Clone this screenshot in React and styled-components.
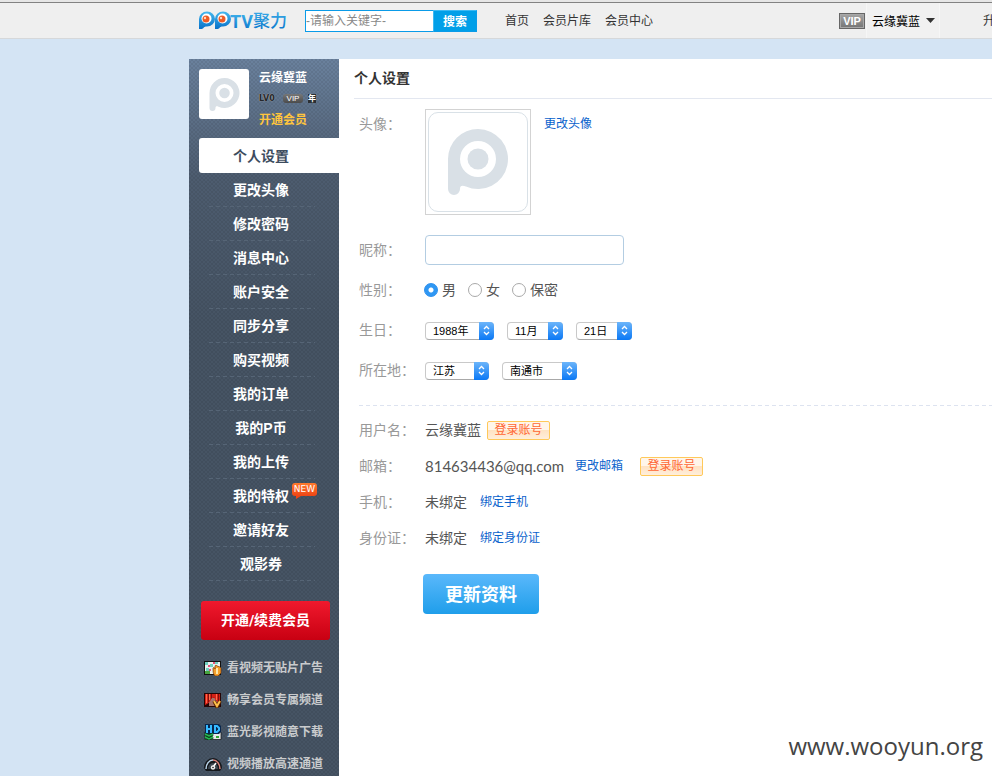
import React from "react";
import styled, { createGlobalStyle } from "styled-components";

const GlobalStyle = createGlobalStyle`
  *, *::before, *::after { box-sizing: border-box; }
  html { height: 100%; overflow: hidden; }
  body {
    margin: 0;
    height: 100%;
    background: #d4e4f4;
    color: #333;
    font: 14px/20px "Liberation Sans", "Noto Sans CJK SC", sans-serif;
  }
  #root { min-height: 100%; display: flex; flex-direction: column; }
  ul { margin: 0; padding: 0; list-style: none; }
  a { color: inherit; text-decoration: none; }
  button, input, select { font-family: inherit; margin: 0; }
  svg { display: block; flex: none; }
`;

const Page = styled.div`
  flex: 1;
  display: flex;
  flex-direction: column;
  overflow: hidden;
`;

/* ---------- top bar ---------- */
const TopBar = styled.header`
  display: flex;
  align-items: center;
  flex: none;
  height: 39px;
  padding: 3px 0 0 198px;
  background: linear-gradient(#e6e6e6 2px, #828282 2px, #828282 3px, #efefef 3px);
  border-bottom: 1px solid #d6d8da;
  font-size: 12px;
  white-space: nowrap;
`;

const SearchForm = styled.form`
  display: flex;
  flex: none;
  height: 22px;
  margin: 0 28px 0 16px;
`;

const SearchInput = styled.input`
  width: 128px;
  padding: 0;
  border: 1px solid #0a9be8;
  border-right: 0;
  border-radius: 0;
  background: #fff;
  font-size: 12px;
  outline: 0;
  &::placeholder { color: #888; opacity: 1; }
`;

const SearchButton = styled.button`
  width: 44px;
  padding: 0;
  border: 1px solid #0a9be8;
  border-top-color: #3cb9f2;
  border-left-color: #3cb9f2;
  background: #009fe8;
  color: #fff;
  font-size: 12px;
  font-weight: bold;
`;

const TopNav = styled.nav`
  display: flex;
  gap: 14px;
`;

const UserArea = styled.div`
  display: flex;
  align-items: center;
  flex: none;
  width: 153px;
  height: 100%;
  margin-left: auto;
  overflow: hidden;
`;

const VipBadge = styled.span`
  width: 26px;
  flex: none;
  height: 16px;
  border: 1px solid #666;
  box-shadow: inset 0 0 0 1px #a8a8a8;
  background: linear-gradient(#a5a5a5, #747474);
  color: #fff;
  font-size: 11px;
  line-height: 14px;
  text-align: center;
  font-weight: bold;
`;

const UserMenu = styled.button`
  display: flex;
  align-items: center;
  flex: none;
  gap: 6px;
  height: 100%;
  width: 74px;
  margin: 0 43px 0 1px;
  padding: 0 0 0 5px;
  border: 0;
  border-left: 1px solid #f6f6f6;
  border-right: 1px solid #f6f6f6;
  background: #f1f1f1;
  color: #000;
  font-size: 12px;
`;

/* ---------- columns ---------- */
const Columns = styled.div`
  flex: 1;
  display: flex;
  align-items: stretch;
  padding: 20px 0 0 189px;
`;

const Sidebar = styled.aside`
  flex: none;
  width: 150px;
  background:
    conic-gradient(rgba(0, 0, 0, 0.07) 25%, transparent 0 50%, rgba(0, 0, 0, 0.07) 0 75%, transparent 0) 0 0 / 4px 4px,
    linear-gradient(#6a819d, #4d5c6f 120px, #465464 260px);
`;

const Profile = styled.div`
  display: flex;
  gap: 10px;
  height: 79px;
  padding: 10px 0 0 10px;
`;

const SmallAvatar = styled.div`
  display: grid;
  place-items: center;
  width: 50px;
  height: 50px;
  border-radius: 3px;
  background: #fff;
`;

const ProfileInfo = styled.div`
  font-size: 12px;
  line-height: 18px;
  font-weight: bold;
  color: #fff;
`;

const BadgeRow = styled.div`
  display: flex;
  align-items: center;
  gap: 5px;
  height: 22px;
  font-size: 8px;
  line-height: 9px;
`;

const Level = styled.span`
  width: 19px;
  color: #25282c;
  font: bold 8px/9px "DejaVu Sans", sans-serif;
  text-shadow: 0 0 1px #aaa, 0 0 1px #999;
`;

const MiniVip = styled.span`
  width: 20px;
  border-radius: 3px;
  background: linear-gradient(#777, #4b4b4b);
  text-align: center;
  font-weight: normal;
`;

const YearMark = styled.span`
  background: #2b2f33;
`;

const OpenLink = styled.a`
  display: block;
  line-height: 22px;
  color: #ffc53d;
`;

const MenuLink = styled.a`
  display: flex;
  justify-content: center;
  align-items: center;
  height: ${(p) => (p.$active ? 35 : 34)}px;
  margin-left: 10px;
  padding-right: 16px;
  border-radius: 3px 0 0 3px;
  color: ${(p) => (p.$active ? "#3d4c5e" : "#fff")};
  background: ${(p) => (p.$active ? "#fff" : "transparent")};
  font-weight: bold;
`;

const MenuItem = styled.li`
  position: relative;
  &:not(:first-child)::after {
    content: "";
    position: absolute;
    left: 20px;
    right: 24px;
    bottom: 0;
    height: 1px;
    background: repeating-linear-gradient(90deg, #566576 0 4px, transparent 4px 7px);
  }
`;

const NewBadge = styled.span`
  position: absolute;
  left: 103px;
  top: 4px;
  width: 25px;
  height: 13px;
  border-radius: 3px;
  background: linear-gradient(#ff7a2e, #ee4515);
  color: #fff;
  font: 9px/13px "DejaVu Sans", sans-serif;
  text-align: center;
  &::after {
    content: "";
    position: absolute;
    left: 4px;
    top: 13px;
    border: solid transparent;
    border-width: 0 5px 3px 0;
    border-top: 3px solid #ee4515;
    border-bottom: 0;
  }
`;

const RenewButton = styled.button`
  display: block;
  width: 129px;
  height: 39px;
  margin: 20px 0 12px 12px;
  padding: 0;
  border: 0;
  border-radius: 3px;
  background: linear-gradient(#f0192d, #c80012);
  color: #fff;
  font: bold 14px/39px "DejaVu Sans", "Noto Sans CJK SC", sans-serif;
`;

const Perk = styled.li`
  display: flex;
  align-items: center;
  gap: 5px;
  height: 32px;
  padding-left: 15px;
  color: #c9cbcd;
  font-size: 12px;
  font-weight: bold;
  white-space: nowrap;
`;

/* ---------- main panel ---------- */
const Main = styled.main`
  flex: 1;
  min-width: 0;
  background: #fff;
`;

const Title = styled.h1`
  height: 40px;
  margin: 0 0 10px 15px;
  border-bottom: 1px solid #e3e7f0;
  color: #333;
  font-size: 14px;
  line-height: 38px;
`;

const Section = styled.div`
  margin-left: 20px;
`;

const Row = styled.div`
  display: grid;
  grid-template-columns: 66px 1fr;
  align-items: ${(p) => (p.$top ? "start" : "center")};
  min-height: ${(p) => p.$height}px;
`;

const Label = styled.label`
  color: #999;
  line-height: 30px;
`;

const Value = styled.div`
  display: flex;
  align-items: ${(p) => (p.$top ? "start" : "center")};
  gap: ${(p) => p.$gap || 13}px;
  color: #555;
`;

const PhotoFrame = styled.div`
  width: 106px;
  height: 106px;
  padding: 2px;
  border: 1px solid #d3d3d3;
`;

const Photo = styled.div`
  display: grid;
  place-items: center;
  height: 100%;
  border: 1px solid #d9e1e7;
  border-radius: 10px;
`;

const TextLink = styled.a`
  color: #0a62cc;
  font-size: 12px;
  line-height: ${(p) => (p.$tall ? 30 : 20)}px;
`;

const TextBox = styled.input`
  width: 199px;
  height: 30px;
  padding: 0 8px;
  border: 1px solid #b3cde2;
  border-radius: 4px;
  font-size: 14px;
`;

const Choices = styled.div`
  display: flex;
  gap: 12px;
  margin-left: -1px;
  color: #555;
`;

const Choice = styled.label`
  display: flex;
  align-items: center;
  gap: 4px;
`;

const Radio = styled.input`
  appearance: none;
  width: 14px;
  height: 14px;
  border: 1px solid #a9a9a9;
  border-radius: 50%;
  background: #fff;
  &:checked {
    border-color: #2b8fee;
    background: radial-gradient(circle, #fff 2px, #2f97f3 3px);
  }
`;

const SelectWrap = styled.span`
  position: relative;
  display: block;
  width: ${(p) => p.$width}px;
  height: 18px;
  margin-top: 1px;
`;

const SelectField = styled.select`
  display: block;
  appearance: none;
  width: 100%;
  height: 100%;
  padding: 0 16px 0 7px;
  border: 1px solid #c9c9c9;
  border-bottom-color: #a8a8a8;
  border-radius: 4px;
  background: #fff;
  color: #000;
  font-size: 11px;
  line-height: 16px;
`;

const Stepper = styled.span`
  position: absolute;
  top: 0;
  right: 0;
  display: grid;
  place-items: center;
  width: 15px;
  height: 18px;
  border-radius: 0 4px 4px 0;
  background: linear-gradient(#6cb5fa, #0a78f5);
  pointer-events: none;
`;

const Divider = styled.div`
  height: 1px;
  margin: 15px 0 6px;
  background: repeating-linear-gradient(90deg, #dde3f0 0 4px, transparent 4px 7px);
`;

const Email = styled.span`
  font-family: Lato, sans-serif;
  font-size: 15px;
`;

const Tag = styled.span`
  width: 63px;
  height: 19px;
  margin-left: ${(p) => (p.$spaced ? 6 : 0)}px;
  border: 1px solid #ffc95a;
  border-radius: 2px;
  background: linear-gradient(#fff6ea 50%, #ffe3c3 50%, #ffeedb);
  color: #ff6633;
  font-size: 12px;
  line-height: 17px;
  text-align: center;
`;

const SaveButton = styled.button`
  display: block;
  width: 116px;
  height: 40px;
  margin: 18px 0 0 64px;
  padding: 0 0 2px;
  border: 0;
  border-radius: 4px;
  background: linear-gradient(#5ab8fb, #1f9eea);
  color: #fff;
  font-size: 18px;
  font-weight: bold;
`;

const Watermark = styled.div`
  position: absolute;
  right: 9px;
  bottom: 12px;
  color: #444;
  font: 24px/36px "Open Sans", sans-serif;
`;

/* ---------- drawings ---------- */
function PMark({ size }) {
  return (
    <svg width={size} height={size} viewBox="0 0 66 66" aria-hidden="true">
      <path
        fill="#d9e0e6"
        fillRule="evenodd"
        d="M33 0a30 30 0 1 1-12 57.500c-4-1.500-6-1-6 2.500a6 6 0 0 1-12 0V30A30 30 0 0 1 33 0zM33 12a18 18 0 1 0 0 36 18 18 0 0 0 0-36z"
      />
      <circle cx="33" cy="30" r="10.500" fill="#d9e0e6" />
    </svg>
  );
}

function Eye({ x }) {
  return (
    <g transform={`translate(${x} 0)`}>
      <path d="M1 20V10a8 7.500 0 1 1 8 7.500c-2 0-3 .5-3.500 1.500S3 20 1 20z" fill="url(#pptvBlue)" />
      <circle cx="8.500" cy="9.500" r="5" fill="#fff" />
      <circle cx="8" cy="10" r="3.500" fill="#ed5b25" />
      <circle cx="7" cy="9" r="1.200" fill="#ffd9bd" />
    </g>
  );
}

function Logo() {
  return (
    <svg width="91" height="24" viewBox="0 0 91 24" role="img" aria-label="PPTV聚力">
      <defs>
        <linearGradient id="pptvBlue" x1="0" y1="0" x2="0" y2="1">
          <stop offset="0" stopColor="#45b8ee" />
          <stop offset="1" stopColor="#0871c9" />
        </linearGradient>
      </defs>
      <Eye x={0} />
      <Eye x={16} />
      <text x="32" y="19" fill="url(#pptvBlue)" fontFamily="Roboto, sans-serif" fontWeight="700" fontSize="18">TV</text>
      <text x="55" y="18" fill="url(#pptvBlue)" fontFamily="Noto Sans CJK SC, sans-serif" fontWeight="500" fontSize="17">聚力</text>
    </svg>
  );
}

function Arrows() {
  return (
    <svg width="7" height="11" viewBox="0 0 7 11" fill="none" stroke="#fff" strokeWidth="1.300" aria-hidden="true">
      <path d="M1 4l2.500-2.500L6 4M1 7l2.500 2.500L6 7" />
    </svg>
  );
}

function AdIcon() {
  return (
    <svg width="18" height="16" viewBox="0 0 18 16" aria-hidden="true">
      <path fill="#111" d="M0 1h17v14H0z" />
      <path fill="#e9f2ef" d="M1 2h15v12H1z" />
      <path fill="#6fd0c0" d="M1 2h3v3H1zM6 4h3v3H6zM2 8h3v3H2zM11 2h3v2h-3z" />
      <path fill="#e2557c" d="M4 5h2v2H4zM9 2h2v2H9zM5 9h2v2H5z" />
      <path fill="#49a540" d="M1 11h5v3H1z" />
      <path fill="#f4a02c" stroke="#7d3500" strokeWidth=".7" d="M9 8c1-1 2 0 2 1V6c0-1 2-1 2 0l3 1 1 1v5l-3 3h-3c-2-2-2-5-2-8z" />
      <path fill="#ffe6a8" d="M12 8h2v6h-2z" />
    </svg>
  );
}

function CurtainIcon() {
  return (
    <svg width="18" height="16" viewBox="0 0 18 16" aria-hidden="true">
      <path fill="#260505" d="M0 1h17v14H0z" />
      <path fill="#a8746b" d="M5 9l3-3h3l3 3v5H5z" />
      <path fill="#d52117" d="M1 2h15v2L9 6 1 5zM1 2h7c0 5-2 9-7 11zM9 2h7v9c-4-1-6-5-7-9z" />
      <path fill="#ff6b4d" d="M2 2h1v9H2zM5 2h1v6H5zM12 2h1v6h-1z" />
      <path fill="#7e120d" d="M4 2h1v8H4zM7 2h1v4H7zM14 2h1v7h-1z" />
      <path fill="none" stroke="#5a2500" strokeWidth="3.500" d="M10 9l3 6 3-6" />
      <path fill="none" stroke="#ffc04a" strokeWidth="2" d="M10 9l3 5 3-5" />
    </svg>
  );
}

function HdIcon() {
  return (
    <svg width="18" height="16" viewBox="0 0 18 16" aria-hidden="true">
      <path fill="#e6eaea" stroke="#111" strokeWidth=".7" d="M1 8h16v7.500H1z" />
      <path fill="#08264d" d="M1 0h14l2 2v6l-2 2H1z" />
      <path fill="none" stroke="#35b9ff" strokeWidth="2" d="M3 1v8M7 1v8M3 5h4M11 2v6h2l2-2V4l-2-2z" />
      <path fill="none" stroke="#073d18" strokeWidth="3" d="M1 10l4 2 4-2M1 13l4 2 4-2" />
      <path fill="none" stroke="#27b552" strokeWidth="1.500" d="M1 10l4 2 4-2M1 13l4 2 4-2" />
      <path fill="#35a936" d="M12 12h3v2h-3z" />
    </svg>
  );
}

function GaugeIcon() {
  return (
    <svg width="18" height="16" viewBox="0 0 18 16" aria-hidden="true">
      <path fill="#15181c" d="M0 12a9 10 0 0 1 18 0l-2 3H2z" />
      <path fill="none" stroke="#b9d3e8" strokeWidth="1.500" d="M2 13a7 9 0 0 1 7-9" />
      <path fill="none" stroke="#d98079" strokeWidth="1.500" d="M9 4a7 9 0 0 1 7 9" />
      <path fill="#3c4650" d="M4 13a5 6 0 0 1 10 0z" />
      <path stroke="#fff" strokeWidth="1.500" d="M9 11l3-4" />
      <circle cx="9" cy="11.500" r="2.200" fill="#eee" />
      <circle cx="9" cy="11.500" r=".8" fill="#222" />
    </svg>
  );
}

const menu = [
  "个人设置", "更改头像", "修改密码", "消息中心", "账户安全", "同步分享", "购买视频",
  "我的订单", "我的P币", "我的上传", "我的特权", "邀请好友", "观影券",
];

const perks = [
  [AdIcon, "看视频无贴片广告"],
  [CurtainIcon, "畅享会员专属频道"],
  [HdIcon, "蓝光影视随意下载"],
  [GaugeIcon, "视频播放高速通道"],
];

function Picker({ id, label, width, value }) {
  return (
    <SelectWrap $width={width}>
      <SelectField id={id} aria-label={label} defaultValue={value}>
        <option>{value}</option>
      </SelectField>
      <Stepper><Arrows /></Stepper>
    </SelectWrap>
  );
}

export default function App() {
  return (
    <Page>
      <GlobalStyle />
      <TopBar>
        <Logo />
        <SearchForm role="search">
          <SearchInput aria-label="搜索" placeholder="-请输入关键字-" />
          <SearchButton type="button">搜索</SearchButton>
        </SearchForm>
        <TopNav>
          <a href="#home">首页</a>
          <a href="#library">会员片库</a>
          <a href="#center">会员中心</a>
        </TopNav>
        <UserArea>
          <VipBadge>VIP</VipBadge>
          <UserMenu type="button">
            云缘冀蓝
            <svg width="9" height="5" viewBox="0 0 9 5" aria-hidden="true"><path d="M0 0h9L4.500 5z" fill="#333" /></svg>
          </UserMenu>
          <a href="#upgrade">升</a>
        </UserArea>
      </TopBar>

      <Columns>
        <Sidebar>
          <Profile>
            <SmallAvatar><PMark size={33} /></SmallAvatar>
            <ProfileInfo>
              云缘冀蓝
              <BadgeRow>
                <Level>LV0</Level>
                <MiniVip>VIP</MiniVip>
                <YearMark>年</YearMark>
              </BadgeRow>
              <OpenLink href="#open">开通会员</OpenLink>
            </ProfileInfo>
          </Profile>
          <ul>
            {menu.map((name, i) => (
              <MenuItem key={name}>
                <MenuLink href={`#m${i}`} $active={i === 0}>{name}</MenuLink>
                {name === "我的特权" && <NewBadge>NEW</NewBadge>}
              </MenuItem>
            ))}
          </ul>
          <RenewButton type="button">开通/续费会员</RenewButton>
          <ul>
            {perks.map(([Icon, text]) => (
              <Perk key={text}><Icon />{text}</Perk>
            ))}
          </ul>
        </Sidebar>

        <Main>
          <Title>个人设置</Title>
          <Section>
            <Row $top $height={121}>
              <Label as="span">头像：</Label>
              <Value $top>
                <PhotoFrame><Photo><PMark size={66} /></Photo></PhotoFrame>
                <TextLink href="#avatar" $tall>更改头像</TextLink>
              </Value>
            </Row>
            <Row $height={40}>
              <Label htmlFor="nick">昵称：</Label>
              <Value><TextBox id="nick" type="text" /></Value>
            </Row>
            <Row $height={40}>
              <Label as="span">性别：</Label>
              <Choices>
                <Choice><Radio type="radio" name="sex" defaultChecked />男</Choice>
                <Choice><Radio type="radio" name="sex" />女</Choice>
                <Choice><Radio type="radio" name="sex" />保密</Choice>
              </Choices>
            </Row>
            <Row $height={40}>
              <Label htmlFor="year">生日：</Label>
              <Value>
                <Picker id="year" label="年" width={69} value="1988年" />
                <Picker id="month" label="月" width={56} value="11月" />
                <Picker id="day" label="日" width={56} value="21日" />
              </Value>
            </Row>
            <Row $height={40}>
              <Label htmlFor="province">所在地：</Label>
              <Value>
                <Picker id="province" label="省份" width={64} value="江苏" />
                <Picker id="city" label="城市" width={75} value="南通市" />
              </Value>
            </Row>
            <Divider />
            <Row $height={36}>
              <Label as="span">用户名：</Label>
              <Value $gap={6}>云缘冀蓝<Tag>登录账号</Tag></Value>
            </Row>
            <Row $height={36}>
              <Label as="span">邮箱：</Label>
              <Value $gap={11}>
                <Email>814634436@qq.com</Email>
                <TextLink href="#email">更改邮箱</TextLink>
                <Tag $spaced>登录账号</Tag>
              </Value>
            </Row>
            <Row $height={36}>
              <Label as="span">手机：</Label>
              <Value>未绑定<TextLink href="#phone">绑定手机</TextLink></Value>
            </Row>
            <Row $height={36}>
              <Label as="span">身份证：</Label>
              <Value>未绑定<TextLink href="#idcard">绑定身份证</TextLink></Value>
            </Row>
            <SaveButton type="button">更新资料</SaveButton>
          </Section>
        </Main>
      </Columns>
      <Watermark>www.wooyun.org</Watermark>
    </Page>
  );
}
